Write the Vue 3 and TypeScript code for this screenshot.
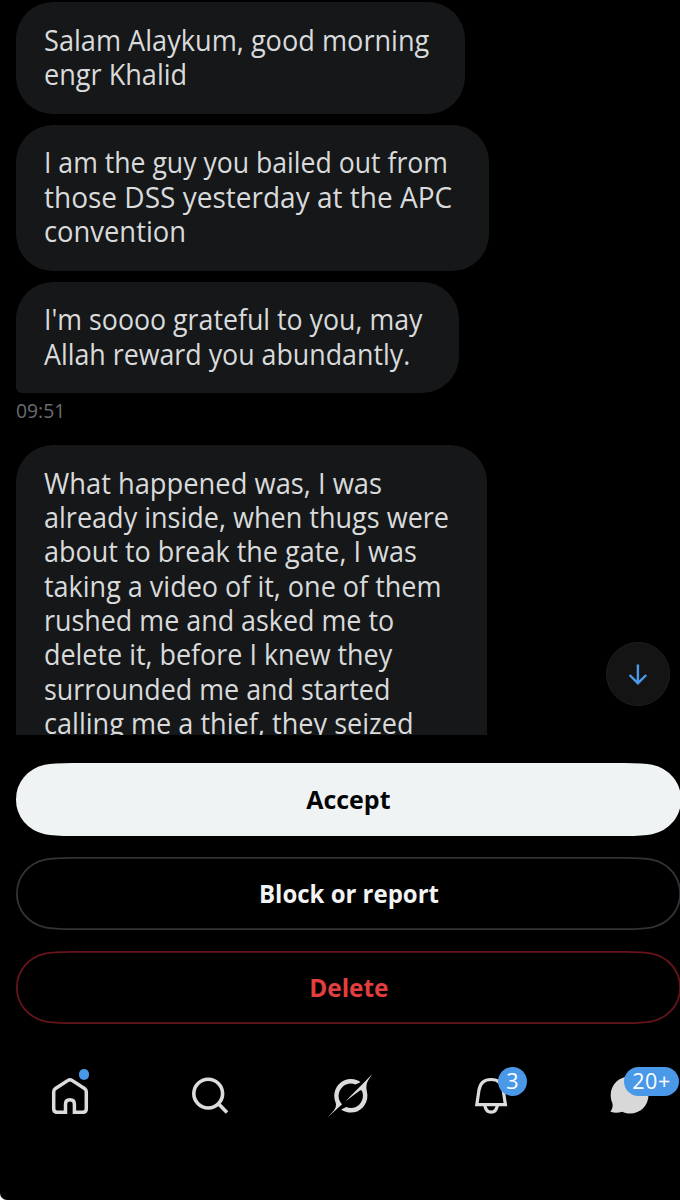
<script setup lang="ts">
import { nextTick, onMounted, ref } from 'vue'

interface Line { text: string; width: number }
interface Message { id: string; width: number; lines: Line[]; tail?: boolean; open?: boolean; time?: string }

const messages: Message[] = [
  {
    id: 'greeting',
    width: 449,
    lines: [
      { text: 'Salam Alaykum, good morning', width: 385.5 },
      { text: 'engr Khalid', width: 143 },
    ],
  },
  {
    id: 'intro',
    width: 472.5,
    lines: [
      { text: 'I am the guy you bailed out from', width: 404 },
      { text: 'those DSS yesterday at the APC', width: 408.5 },
      { text: 'convention', width: 142.5 },
    ],
  },
  {
    id: 'thanks',
    width: 442.5,
    tail: true,
    time: '09:51',
    lines: [
      { text: "I'm soooo grateful to you, may", width: 378 },
      { text: 'Allah reward you abundantly.', width: 366.5 },
    ],
  },
  {
    id: 'story',
    width: 471,
    open: true,
    lines: [
      { text: 'What happened was, I was', width: 338.5 },
      { text: 'already inside, when thugs were', width: 405.5 },
      { text: 'about to break the gate, I was', width: 373 },
      { text: 'taking a video of it, one of them', width: 397.5 },
      { text: 'rushed me and asked me to', width: 350 },
      { text: 'delete it, before I knew they', width: 348.5 },
      { text: 'surrounded me and started', width: 346 },
      { text: 'calling me a thief, they seized', width: 370 },
    ],
  },
]

const actions = [
  { label: 'Accept', kind: 'primary', width: 84.5 },
  { label: 'Block or report', kind: 'neutral', width: 180 },
  { label: 'Delete', kind: 'danger', width: 79.5 },
]

// Condenses each line horizontally to its measured width.
const root = ref<HTMLElement | null>(null)
onMounted(async () => {
  await nextTick()
  root.value?.querySelectorAll<HTMLElement>('[data-fit]').forEach((el) => {
    const target = Number(el.dataset.fit)
    el.style.transform = `scaleX(${target / el.offsetWidth})`
  })
})
</script>

<template>
  <div ref="root" class="screen">
    <main class="thread">
      <section v-for="m in messages" :key="m.id" class="message">
        <div class="bubble" :class="{ tail: m.tail, open: m.open }" :style="{ width: m.width + 'px' }">
          <div v-for="l in m.lines" :key="l.text" class="line">
            <span class="fit" :data-fit="l.width">{{ l.text }}</span>
          </div>
        </div>
        <time v-if="m.time" class="time"><span class="fit" data-fit="49.5">{{ m.time }}</span></time>
      </section>
      <button class="jump" aria-label="Scroll down">
        <svg width="64" height="64" viewBox="0 0 64 64" fill="none" stroke="#4a99e9" stroke-width="2.4">
          <path d="M31.9 22.5V41M23.6 33L31.9 41.2L40.2 33" />
        </svg>
      </button>
    </main>

    <div class="actions">
      <button v-for="a in actions" :key="a.label" class="action" :class="a.kind">
        <svg class="capsule" width="665" height="73" viewBox="0 0 665 73" stroke-width="1.8">
          <path d="M56 .9C44 .9 36 1.2 29 2.700C12 6.500 .9 20 .9 36.5C.9 53 12 66.500 29 70.300C36 71.800 44 72.1 56 72.1H609C621 72.1 629 71.800 636 70.300C653 66.500 664.1 53 664.1 36.5C664.1 20 653 6.500 636 2.700C629 1.200 621 .9 609 .9Z" />
        </svg>
        <span class="fit centered" :data-fit="a.width">{{ a.label }}</span>
      </button>
    </div>

    <nav class="nav">
      <a class="item">
        <svg width="48" height="48" viewBox="46 1072 48 48" fill="none" stroke="#dcdcdc" stroke-width="3.5">
          <path d="M65.5 1112.2H57.2Q53.7 1112.2 53.7 1108.7V1091.8Q53.7 1089.7 55.5 1088.5L68 1080.4Q70 1079.2 72 1080.4L84.5 1088.5Q86.3 1089.7 86.3 1091.8V1108.7Q86.3 1112.2 82.8 1112.2H74.4V1104.2Q74.4 1099.7 69.95 1099.7Q65.5 1099.7 65.5 1104.2V1113.9M74.4 1112.2V1113.9" />
        </svg>
        <i class="dot"></i>
      </a>
      <a class="item">
        <svg width="48" height="48" viewBox="186 1072 48 48" fill="none" stroke="#dcdcdc" stroke-width="3.6">
          <circle cx="208.2" cy="1093.6" r="14.4" />
          <path d="M218.2 1103.6L227 1112.4" />
        </svg>
      </a>
      <a class="item">
        <svg class="slash" width="44.4" height="43" viewBox="0 0 33 32" fill="#dcdcdc">
          <path d="M12.745 20.54l10.97-8.19c.539-.4 1.307-.244 1.564.38 1.349 3.288.746 7.241-1.938 9.955-2.683 2.714-6.417 3.31-9.83 1.954l-3.728 1.745c5.347 3.697 11.84 2.782 15.898-1.324 3.219-3.255 4.216-7.692 3.284-11.693l.008.009c-1.351-5.878.332-8.227 3.782-13.031L33 0l-4.54 4.59v-.014L12.743 20.544m-2.263 1.987c-3.837-3.707-3.175-9.446.1-12.755 2.42-2.449 6.388-3.448 9.852-1.979l3.72-1.737c-.67-.49-1.53-1.017-2.515-1.387-4.455-1.854-9.789-.931-13.41 2.728-3.483 3.523-4.579 8.94-2.697 13.561 1.405 3.454-.899 5.898-3.22 8.364C1.49 30.2.666 31.074 0 32l10.478-9.466" />
        </svg>
      </a>
      <a class="item">
        <svg width="48" height="48" viewBox="466 1072 48 48" fill="none" stroke="#dcdcdc" stroke-width="3.2">
          <path d="M476.8 1104.7L478.9 1090.6C479.9 1083.5 484.3 1079.5 491.1 1079.5C497.9 1079.5 502.3 1083.5 503.3 1090.6L505.4 1104.7Z" />
          <path d="M484.7 1104.8C485.4 1109.7 487.6 1112.2 491.1 1112.2S496.8 1109.7 497.5 1104.8" />
        </svg>
        <b class="badge round">3</b>
      </a>
      <a class="item">
        <svg width="48" height="48" viewBox="606 1072 48 48" fill="#d8d8d8">
          <path d="M629.5 1076.5C640 1076.5 648.5 1084.5 648.5 1095C648.5 1105.5 640.5 1113.5 630 1113.5C626.8 1113.5 624.5 1112.9 622.2 1111.7C618.5 1112.8 614.5 1113.3 610.3 1111.5C612.3 1109.3 613 1106.5 612.5 1103.7C611.5 1101 610.7 1098.5 610.7 1095C610.7 1084.5 619.3 1076.5 629.5 1076.5Z" />
        </svg>
        <b class="badge wide">20+</b>
      </a>
    </nav>
  </div>
</template>

<style>
html, body { margin: 0; background: #fff; overflow: hidden; }
</style>

<style scoped>
.screen {
  box-sizing: border-box;
  width: 680px;
  height: 1200px;
  display: flex;
  flex-direction: column;
  overflow: hidden;
  background: #000;
  border-bottom-left-radius: 7px;
  font-family: "Open Sans", "Noto Sans", sans-serif;
}
button { padding: 0; font-family: inherit; }
.thread {
  position: relative;
  box-sizing: border-box;
  height: 735px;
  flex: none;
  padding: 2.4px 0 0 16px;
  overflow: hidden;
}
.message { margin-bottom: 11.1px; }
.bubble {
  box-sizing: border-box;
  padding: 20.6px 0 22.1px 28.2px;
  border-radius: 37px;
  background: #161719;
  color: #d9dadb;
  font-size: 28.8px;
  line-height: 34.33px;
}
.bubble.tail { border-bottom-left-radius: 6px; }
.bubble.open { border-bottom-left-radius: 0; border-bottom-right-radius: 0; }
.line { height: 34.33px; white-space: nowrap; }
.fit { display: inline-block; white-space: nowrap; transform-origin: 0 50%; }
.centered { position: relative; transform-origin: 50% 50%; }
.time {
  display: block;
  height: 41px;
  padding-top: 4px;
  box-sizing: border-box;
  font-size: 19.5px;
  line-height: 27px;
  color: #696c6f;
}
.jump {
  position: absolute;
  left: 606px;
  top: 642px;
  width: 64px;
  height: 64px;
  box-sizing: border-box;
  border: 1px solid #1d1e1f;
  border-radius: 50%;
  background: #141414;
}
.jump svg { display: block; margin: -1px; }
.actions {
  display: flex;
  flex-direction: column;
  gap: 21px;
  padding: 28px 0 0 16px;
}
.action {
  position: relative;
  width: 665px;
  height: 73px;
  flex: none;
  box-sizing: border-box;
  border: 0;
  background: transparent;
  font-size: 24.5px;
  font-weight: 700;
  line-height: 36px;
}
.capsule { position: absolute; left: 0; top: 0; fill: none; }
.primary { color: #050505; }
.primary .capsule { fill: #eff3f4; stroke: #eff3f4; }
.neutral { color: #f2f3f3; }
.neutral .capsule { stroke: #323337; }
.danger { color: #e23e3e; }
.danger .capsule { stroke: #651519; }
.nav {
  width: 700px;
  flex: none;
  display: grid;
  grid-template-columns: repeat(5, 140px);
  margin-top: 48px;
}
.item {
  position: relative;
  height: 48px;
  display: flex;
  justify-content: center;
  align-items: flex-start;
}
.item svg { flex: none; display: block; }
.slash { margin-top: 1.5px; }
.dot {
  position: absolute;
  left: 78.7px;
  top: -3px;
  width: 10.6px;
  height: 10.6px;
  border-radius: 50%;
  background: #4a99e9;
}
.badge {
  position: absolute;
  display: flex;
  justify-content: center;
  align-items: center;
  box-sizing: border-box;
  height: 28.6px;
  background: #4a99e9;
  border-radius: 15px;
  color: #fff;
  font-size: 21.5px;
  font-weight: 400;
  line-height: 28px;
}
.round { left: 78.2px; top: -4.8px; width: 28.4px; padding-bottom: 1px; }
.wide { left: 63.5px; top: -4.8px; width: 55px; padding: 0 0 1px 1px; letter-spacing: 0.6px; }
</style>
